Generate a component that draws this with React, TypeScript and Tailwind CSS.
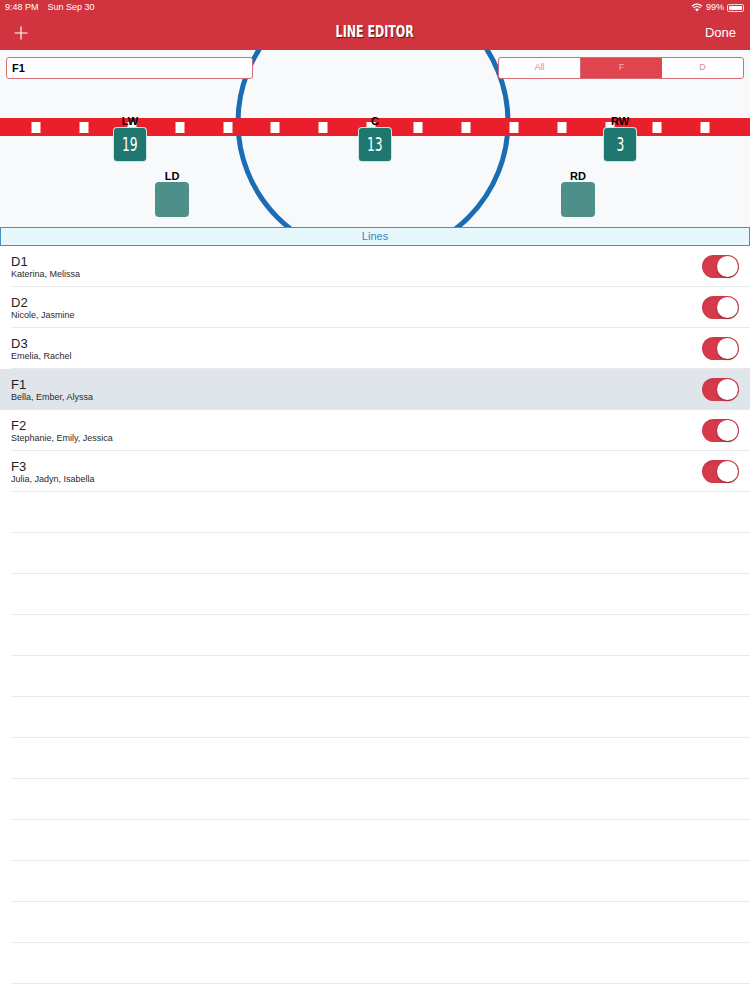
import React from "react";

const lines = [
  { name: "D1", players: "Katerina, Melissa" },
  { name: "D2", players: "Nicole, Jasmine" },
  { name: "D3", players: "Emelia, Rachel" },
  { name: "F1", players: "Bella, Ember, Alyssa", selected: true },
  { name: "F2", players: "Stephanie, Emily, Jessica" },
  { name: "F3", players: "Julia, Jadyn, Isabella" },
];

const tickXs = [36, 84, 132, 180, 228, 275, 323, 371, 418, 466, 514, 562, 610, 657, 705];

const condensed = { fontFamily: '"DejaVu Sans Condensed", "Liberation Sans Narrow", "Liberation Sans", sans-serif' };

function Player({ label, number, x, y, dim }: { label: string; number?: string; x: number; y: number; dim?: boolean }) {
  return (
    <div className="absolute flex flex-col items-center w-[40px]" style={{ left: x - 20, top: y }}>
      <span className="text-[11px] font-bold leading-[12px] text-black">{label}</span>
      <div
        className={`w-[34px] h-[35px] rounded-[4px] flex items-center justify-center text-white ${
          dim ? "bg-[#4e8f89]" : "bg-[#1f7870] border border-white/80"
        }`}
      >
        <span className="text-[19px] font-normal scale-x-[0.72] inline-block" style={condensed}>
          {number}
        </span>
      </div>
    </div>
  );
}

function Toggle() {
  return (
    <div className="w-[37px] h-[23px] rounded-full bg-[#d63a4b] relative shadow-inner">
      <div className="absolute right-[1px] top-[1px] w-[21px] h-[21px] rounded-full bg-white shadow-[0_1px_2px_rgba(0,0,0,0.35)]" />
    </div>
  );
}

export default function App() {
  return (
    <div className="w-[750px] h-[1000px] overflow-hidden bg-white" style={{ fontFamily: '"Liberation Sans", Arial, sans-serif' }}>
      {/* Header */}
      <header className="bg-[#d1343f] h-[50px] text-white">
        <div className="h-[15px] px-[5px] flex items-center justify-between text-[9px]">
          <div className="flex gap-[9px]">
            <span>9:48 PM</span>
            <span>Sun Sep 30</span>
          </div>
          <div className="flex items-center gap-[3px] pr-[1px]">
            <svg width="12" height="9" viewBox="0 0 12 9">
              <path d="M6 8.5 L4 6.3 A3 3 0 0 1 8 6.3 Z" fill="white" />
              <path d="M2.6 4.9 A5 5 0 0 1 9.4 4.9" stroke="white" strokeWidth="1.3" fill="none" />
              <path d="M1 3.2 A7.3 7.3 0 0 1 11 3.2" stroke="white" strokeWidth="1.3" fill="none" />
            </svg>
            <span>99%</span>
            <div className="w-[17px] h-[8px] rounded-[2px] border border-white/80 p-[1px]">
              <div className="w-full h-full bg-white rounded-[1px]" />
            </div>
          </div>
        </div>
        <div className="h-[35px] px-[14px] flex items-center justify-between">
          <div className="w-[60px]">
            <svg width="14" height="14" viewBox="0 0 14 14">
              <path d="M7 0.5 V13.5 M0.5 7 H13.5" stroke="white" strokeWidth="1.2" />
            </svg>
          </div>
          <span
            className="text-[15px] font-bold inline-block scale-x-[0.82] [text-shadow:1px_1px_1px_rgba(0,0,0,0.6)]"
            style={condensed}
          >
            LINE EDITOR
          </span>
          <span className="text-[13px] w-[60px] text-right">Done</span>
        </div>
      </header>

      {/* Rink */}
      <div className="relative h-[177px] bg-[#f8f9fb] overflow-hidden">
        <svg className="absolute inset-0" width="750" height="177" viewBox="0 0 750 177">
          <circle cx="373" cy="72" r="135" fill="none" stroke="#1a6db4" strokeWidth="5" />
          <rect x="0" y="68" width="750" height="18" fill="#e9202b" />
          {tickXs.map((x) => (
            <rect key={x} x={x - 4.5} y="72" width="9" height="11" fill="white" />
          ))}
        </svg>

        <div className="relative flex justify-between px-[6px] pt-[7px]">
          <div className="w-[247px] h-[22px] bg-white border border-[#d36b74] rounded-[3px] flex items-center px-[5px] text-[11px] font-bold text-black">
            F1
          </div>
          <div className="w-[246px] h-[22px] border border-[#d86a74] rounded-[3px] flex text-[9px] overflow-hidden bg-white">
            <div className="flex-1 flex items-center justify-center text-[#dc8a92] border-r border-[#d86a74]">All</div>
            <div className="flex-1 flex items-center justify-center bg-[#e0444f] text-[#f4b6bb]">F</div>
            <div className="flex-1 flex items-center justify-center text-[#dc8a92]">D</div>
          </div>
        </div>

        <Player label="LW" number="19" x={130} y={65} />
        <Player label="C" number="13" x={375} y={65} />
        <Player label="RW" number="3" x={620} y={65} />
        <Player label="LD" x={172} y={120} dim />
        <Player label="RD" x={578} y={120} dim />
      </div>

      {/* Lines section */}
      <div className="h-[19px] bg-[#e6f8fc] border border-[#4b8fc1] flex items-center justify-center text-[11px] text-[#3b84c0]">
        Lines
      </div>

      <div>
        {lines.map((line) => (
          <div key={line.name} className={`h-[41px] ${line.selected ? "bg-[#dfe5ea]" : ""}`}>
            <div className="h-full ml-[11px] pr-[11px] border-b border-[#e9e9ec] flex items-center justify-between">
              <div className="flex flex-col pt-[1px]">
                <span className="text-[13px] leading-[15px] text-[#1e1e1e]">{line.name}</span>
                <span className="text-[9px] leading-[11px] text-[#2a2a2a]">{line.players}</span>
              </div>
              <Toggle />
            </div>
          </div>
        ))}
        {Array.from({ length: 13 }).map((_, i) => (
          <div key={i} className="h-[41px]">
            <div className="h-full ml-[11px] border-b border-[#e9e9ec]" />
          </div>
        ))}
      </div>
    </div>
  );
}
